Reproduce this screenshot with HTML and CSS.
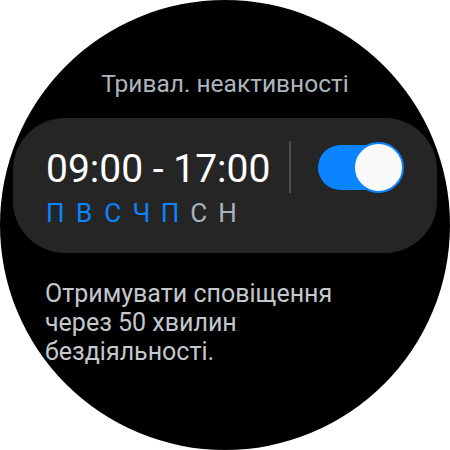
FILE: index.html
```html
<!DOCTYPE html>
<html lang="uk">
<head>
<meta charset="utf-8">
<link rel="stylesheet" href="styles.css">
</head>
<body>
<div class="watch">
  <div class="title">Тривал. неактивності</div>
  <div class="card">
    <div class="top-row">
      <div class="time">09:00 - 17:00</div>
      <div class="divider"></div>
      <div class="toggle">
        <div class="track"></div>
        <div class="knob"></div>
      </div>
    </div>
    <div class="days">
      <span class="day on">П</span>
      <span class="day on">В</span>
      <span class="day on">С</span>
      <span class="day on">Ч</span>
      <span class="day on">П</span>
      <span class="day">С</span>
      <span class="day">Н</span>
    </div>
  </div>
  <div class="desc">Отримувати сповіщення<br>через 50 хвилин<br>бездіяльності.</div>
</div>
</body>
</html>
```

FILE: styles.css
```css
html, body {
  margin: 0;
  padding: 0;
  background: #ffffff;
}
.watch {
  width: 450px;
  height: 450px;
  border-radius: 50%;
  background: #000000;
  overflow: hidden;
  display: flex;
  flex-direction: column;
  font-family: Roboto, "Noto Sans", sans-serif;
  box-sizing: border-box;
  padding-top: 70px;
}
.title {
  text-align: center;
  font-size: 24.5px;
  line-height: 28px;
  color: #adb5bd;
  height: 28px;
}
.card {
  margin: 20px 13px 0 13px;
  height: 135px;
  box-sizing: border-box;
  border-radius: 52px;
  background: #252525;
  padding: 23px 0 0 33px;
}
.top-row {
  display: flex;
  align-items: flex-start;
  height: 52px;
}
.time {
  width: 243px;
  margin-top: 5px;
  font-size: 39px;
  line-height: 46px;
  color: #ffffff;
  white-space: nowrap;
}
.divider {
  width: 2px;
  height: 52px;
  background: #4e4e4e;
}
.toggle {
  position: relative;
  width: 86px;
  height: 51px;
  margin-left: 27px;
  margin-top: 1px;
}
.track {
  position: absolute;
  left: 0;
  top: 3px;
  width: 80px;
  height: 45px;
  border-radius: 23px;
  background: #0a84ff;
}
.knob {
  position: absolute;
  right: 0;
  top: 0;
  width: 51px;
  height: 51px;
  box-sizing: border-box;
  border-radius: 50%;
  background: #fafafa;
  border: 2px solid #0a84ff;
}
.days {
  display: flex;
  margin: 5px 0 0 -5px;
  font-size: 26px;
  line-height: 30px;
  color: #a9b1ba;
}
.day {
  width: 28.7px;
  text-align: center;
}
.day.on {
  color: #0a84ff;
}
.desc {
  margin: 26px 0 0 45px;
  font-size: 25px;
  line-height: 29px;
  color: #c4c8cc;
}
```
